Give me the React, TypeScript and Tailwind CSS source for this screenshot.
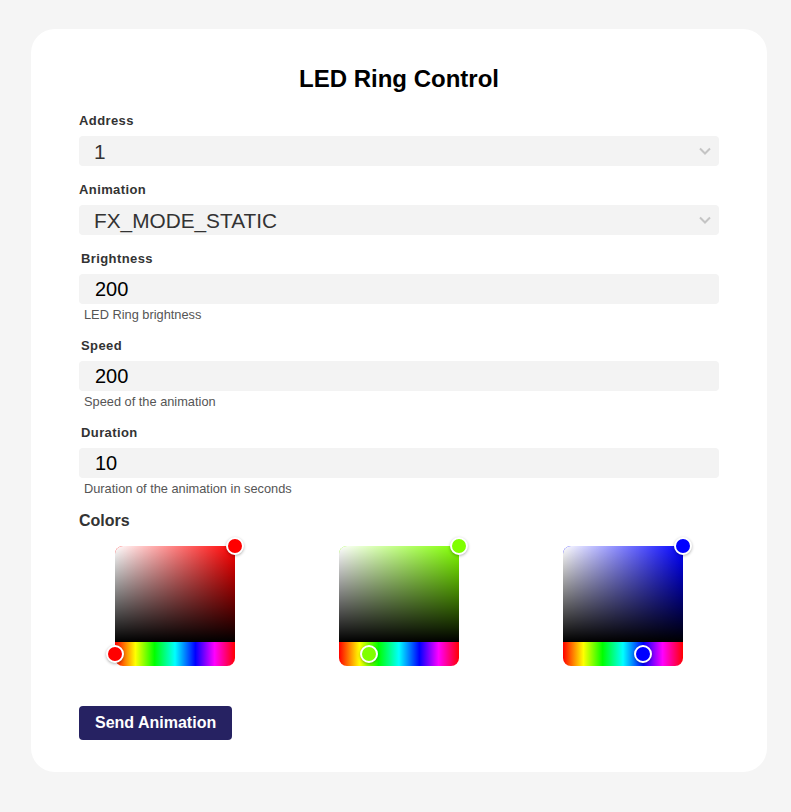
import React from 'react';

const hue =
  'bg-[linear-gradient(to_right,#f00_0%,#ff0_17%,#0f0_33%,#0ff_50%,#00f_67%,#f0f_83%,#f00_100%)]';

const Field: React.FC<{ label: string; value: string; help: string }> = ({ label, value, help }) => (
  <div className="mb-[15px]">
    <label className="mb-[7px] block pl-[2px] text-[13px] font-bold leading-4 tracking-[0.4px] text-[#333]">{label}</label>
    <input
      defaultValue={value}
      className="block h-[30px] w-full rounded bg-[#f3f3f3] px-4 text-[20px] text-black outline-none"
    />
    <p className="mt-[3px] pl-[5px] text-[12.8px] leading-4 text-[#555]">{help}</p>
  </div>
);

const Select: React.FC<{ label: string; value: string }> = ({ label, value }) => (
  <div className="mb-4">
    <label className="mb-[7px] block text-[13px] font-bold leading-4 tracking-[0.4px] text-[#333]">{label}</label>
    <div className="relative">
      <select
        defaultValue={value}
        className="block h-[30px] w-full appearance-none rounded bg-[#f3f3f3] px-[15px] text-[20.8px] text-[#333] outline-none"
      >
        <option value={value}>{value}</option>
      </select>
      <svg
        className="pointer-events-none absolute right-[8px] top-[11px]"
        width="12"
        height="8"
        viewBox="0 0 12 8"
        fill="none"
        stroke="#c4c4c4"
        strokeWidth="2"
      >
        <path d="M1 1.5l5 5 5-5" />
      </svg>
    </div>
  </div>
);

const Picker: React.FC<{ color: string; sat: string; hueLeft: string }> = ({ color, sat, hueLeft }) => (
  <div className="relative h-[120px] w-[120px]">
    <div className={`relative h-[96px] w-full rounded-t-lg ${sat}`}>
      <div className="absolute inset-0 rounded-t-lg bg-[linear-gradient(to_right,#fff,rgba(255,255,255,0))]" />
      <div className="absolute inset-0 rounded-t-lg bg-[linear-gradient(to_top,#000,rgba(0,0,0,0))]" />
      <div
        className={`absolute -right-[9px] -top-[9px] h-[18px] w-[18px] rounded-full border-2 border-white shadow-[0_1px_3px_rgba(0,0,0,0.3)] ${color}`}
      />
    </div>
    <div className={`relative h-6 w-full rounded-b-lg ${hue}`}>
      <div
        className={`absolute top-[3px] h-[18px] w-[18px] rounded-full border-2 border-white shadow-[0_1px_3px_rgba(0,0,0,0.3)] ${color} ${hueLeft}`}
      />
    </div>
  </div>
);

export default function App() {
  return (
    <div className="h-screen overflow-hidden bg-[#f5f5f5] pl-[31px] pt-[29px] font-['Liberation_Sans',Arial,sans-serif]">
      <div className="w-[736px] rounded-3xl bg-white px-12 pt-9 pb-8">
        <h1 className="mb-5 text-center text-[24px] font-bold leading-7 text-black">LED Ring Control</h1>

        <Select label="Address" value="1" />
        <Select label="Animation" value="FX_MODE_STATIC" />
        <Field label="Brightness" value="200" help="LED Ring brightness" />
        <Field label="Speed" value="200" help="Speed of the animation" />
        <Field label="Duration" value="10" help="Duration of the animation in seconds" />

        <h3 className="-mt-px mb-[15px] text-[16px] font-bold leading-5 text-[#333]">Colors</h3>
        <div className="flex justify-between px-9">
          <Picker color="bg-[#ff0000]" sat="bg-[#ff0000]" hueLeft="-left-[9px]" />
          <Picker color="bg-[#80ff00]" sat="bg-[#80ff00]" hueLeft="left-[21px]" />
          <Picker color="bg-[#0000ff]" sat="bg-[#0000ff]" hueLeft="left-[71px]" />
        </div>

        <button className="mt-10 h-[34px] rounded bg-[#262262] px-4 text-[16px] font-bold text-white">
          Send Animation
        </button>
      </div>
    </div>
  );
}
